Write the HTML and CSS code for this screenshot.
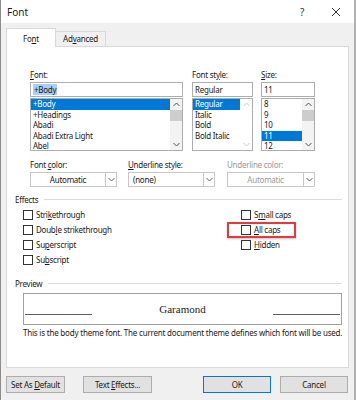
FILE: index.html
```html
<!DOCTYPE html>
<html lang="en">
<head>
    <meta charset="UTF-8">
    <title>Font</title>
    <link rel="stylesheet" href="styles.css">
</head>
<body>
<div class="dialog">
    <!-- title bar -->
    <div class="titlebar">
        <span class="title">Font</span>
        <span class="help">?</span>
        <svg class="close" width="10" height="10" viewBox="0 0 10 10">
            <path d="M1 1 L9 9 M9 1 L1 9" stroke="#333" stroke-width="1" fill="none"/>
        </svg>
    </div>

    <div class="client">
        <div class="tabs">
            <div class="tab active">Fo<u>n</u>t</div>
            <div class="tab">Ad<u>v</u>anced</div>
        </div>

        <div class="panel">
            <!-- font / style / size -->
            <div class="pickers">
                <div class="picker picker-font">
                    <div class="label"><u>F</u>ont:</div>
                    <div class="field"><span class="hilite">+Body</span></div>
                    <div class="listbox">
                        <ul>
                            <li class="selected">+Body</li>
                            <li>+Headings</li>
                            <li>Abadi</li>
                            <li>Abadi Extra Light</li>
                            <li>Abel</li>
                        </ul>
                        <div class="scrollbar">
                            <svg class="arrow" width="7" height="5" viewBox="0 0 7 5"><path d="M0.5 4 L3.5 1 L6.5 4" stroke="#505050" fill="none"/></svg>
                            <div class="thumb"></div>
                            <svg class="arrow down" width="7" height="5" viewBox="0 0 7 5"><path d="M0.5 1 L3.5 4 L6.5 1" stroke="#505050" fill="none"/></svg>
                        </div>
                    </div>
                </div>

                <div class="picker picker-style">
                    <div class="label">Font st<u>y</u>le:</div>
                    <div class="field">Regular</div>
                    <div class="listbox">
                        <ul>
                            <li class="selected">Regular</li>
                            <li>Italic</li>
                            <li>Bold</li>
                            <li>Bold Italic</li>
                        </ul>
                        <div class="scrollbar disabled">
                            <svg class="arrow" width="7" height="5" viewBox="0 0 7 5"><path d="M0.5 4 L3.5 1 L6.5 4" stroke="#c8c8c8" fill="none"/></svg>
                            <svg class="arrow down" width="7" height="5" viewBox="0 0 7 5"><path d="M0.5 1 L3.5 4 L6.5 1" stroke="#c8c8c8" fill="none"/></svg>
                        </div>
                    </div>
                </div>

                <div class="picker picker-size">
                    <div class="label"><u>S</u>ize:</div>
                    <div class="field">11</div>
                    <div class="listbox">
                        <ul>
                            <li>8</li>
                            <li>9</li>
                            <li>10</li>
                            <li class="selected">11</li>
                            <li>12</li>
                        </ul>
                        <div class="scrollbar">
                            <svg class="arrow" width="7" height="5" viewBox="0 0 7 5"><path d="M0.5 4 L3.5 1 L6.5 4" stroke="#505050" fill="none"/></svg>
                            <div class="thumb"></div>
                            <svg class="arrow down" width="7" height="5" viewBox="0 0 7 5"><path d="M0.5 1 L3.5 4 L6.5 1" stroke="#505050" fill="none"/></svg>
                        </div>
                    </div>
                </div>
            </div>

            <!-- colour / underline -->
            <div class="combos">
                <div class="combo-wrap">
                    <div class="label">Font <u>c</u>olor:</div>
                    <div class="combo center">
                        <span class="value">Automatic</span>
                        <span class="drop"><svg width="7" height="5" viewBox="0 0 7 5"><path d="M0.5 1 L3.5 4 L6.5 1" stroke="#606060" fill="none"/></svg></span>
                    </div>
                </div>
                <div class="combo-wrap">
                    <div class="label"><u>U</u>nderline style:</div>
                    <div class="combo">
                        <span class="value">(none)</span>
                        <span class="drop"><svg width="7" height="5" viewBox="0 0 7 5"><path d="M0.5 1 L3.5 4 L6.5 1" stroke="#606060" fill="none"/></svg></span>
                    </div>
                </div>
                <div class="combo-wrap combo-third disabled">
                    <div class="label">Underline color:</div>
                    <div class="combo center">
                        <span class="value">Automatic</span>
                        <span class="drop"><svg width="7" height="5" viewBox="0 0 7 5"><path d="M0.5 1 L3.5 4 L6.5 1" stroke="#606060" fill="none"/></svg></span>
                    </div>
                </div>
            </div>

            <!-- effects -->
            <div class="legend">Effects</div>
            <div class="effects">
                <div class="check"><span class="box"></span>Stri<u>k</u>ethrough</div>
                <div class="check"><span class="box"></span>S<u>m</u>all caps</div>
                <div class="check"><span class="box"></span>Doub<u>l</u>e strikethrough</div>
                <div class="check marked"><span class="box"></span><u>A</u>ll caps<span class="callout"></span></div>
                <div class="check"><span class="box"></span>Su<u>p</u>erscript</div>
                <div class="check"><span class="box"></span><u>H</u>idden</div>
                <div class="check"><span class="box"></span>Su<u>b</u>script</div>
            </div>

            <!-- preview -->
            <div class="legend legend-preview">Preview</div>
            <div class="preview">
                <span class="rule"></span>
                <span class="sample">Garamond</span>
                <span class="rule"></span>
            </div>
            <div class="note">This is the body theme font. The current document theme defines which font will be used.</div>
        </div>

        <div class="buttons">
            <button class="btn btn-default">Set As <u>D</u>efault</button>
            <button class="btn btn-effects">Text <u>E</u>ffects...</button>
            <span class="spacer"></span>
            <button class="btn btn-ok">OK</button>
            <button class="btn btn-cancel">Cancel</button>
        </div>
    </div>
</div>
</body>
</html>
```

FILE: styles.css
```css
* {
    box-sizing: border-box;
}
body {
    margin: 0;
    font-family: "Noto Sans", sans-serif;
    font-size: 8px;
    letter-spacing: -0.25px;
    color: #1a1a1a;
    background: #fff;
}
u {
    text-decoration-thickness: 1px;
    text-underline-offset: 1px;
}
.dialog {
    width: 356px;
    height: 400px;
    border-left: 1px solid #8c8c8c;
    border-right: 2px solid #b0b0b0;
    display: flex;
    flex-direction: column;
}

/* title bar */
.titlebar {
    height: 23px;
    background: #fff;
    display: flex;
    align-items: center;
    padding-left: 6px;
}
.title {
    font-size: 10px;
    letter-spacing: 0;
    flex: 1;
}
.help {
    font-size: 10px;
    color: #333;
    margin-right: 27px;
}
.close {
    margin-right: 13px;
}

.client {
    flex: 1;
    background: #f0f0f0;
    padding: 5px 5px 0 5px;
}

/* tabs */
.tabs {
    display: flex;
    align-items: flex-end;
    height: 18px;
}
.tab {
    width: 50px;
    height: 15px;
    border: 1px solid #d9d9d9;
    border-bottom: none;
    text-align: center;
    line-height: 14px;
    background: #f0f0f0;
}
.tab.active {
    height: 19px;
    margin-bottom: -1px;
    background: #fff;
    line-height: 19px;
    position: relative;
    z-index: 1;
}
.tab + .tab {
    border-left: none;
}

.panel {
    height: 322px;
    width: 343px;
    background: #fff;
    border: 1px solid #d9d9d9;
    padding: 23px 6px 0 8px;
}

.label {
    height: 10px;
    line-height: 10px;
    margin-bottom: 2px;
}

/* pickers */
.pickers {
    display: flex;
    margin-left: 15px;
}
.picker-font { width: 153px; margin-right: 9px; }
.picker-style { width: 61px; margin-right: 8px; }
.picker-size { width: 54px; }

.field {
    height: 15px;
    border: 1px solid #adadad;
    line-height: 13px;
    padding-left: 2px;
    margin-bottom: 1px;
}
.hilite {
    background: #a9d0f2;
    padding: 0 1px;
}
.listbox {
    height: 53px;
    border: 1px solid #adadad;
    display: flex;
    overflow: hidden;
}
.listbox ul {
    flex: 1;
    list-style: none;
    margin: 0;
    padding: 0;
}
.listbox li {
    height: 10.5px;
    line-height: 10.5px;
    padding-left: 2px;
}
.listbox li.selected {
    background: #0078d7;
    color: #fff;
}
.scrollbar {
    width: 12px;
    background: #f3f3f3;
    display: flex;
    flex-direction: column;
    align-items: center;
    padding: 3px 0;
}
.scrollbar .thumb {
    width: 12px;
    height: 11px;
    margin-top: 3px;
    background: #cdcdcd;
}
.scrollbar .down {
    margin-top: auto;
}
.scrollbar.disabled {
    background: #fff;
}

/* combos */
.combos {
    display: flex;
    margin: 9px 0 0 15px;
}
.combo-wrap {
    width: 87px;
    margin-right: 11px;
}
.combo-third {
    width: 88px;
    margin-left: 1px;
    margin-right: 0;
}
.combo-wrap.disabled {
    color: #9a9a9a;
}
.combo {
    height: 15px;
    border: 1px solid #c8c8c8;
    display: flex;
    align-items: stretch;
}
.combo .value {
    flex: 1;
    line-height: 13px;
    padding-left: 4px;
}
.combo.center .value {
    text-align: center;
    padding-left: 0;
}
.combo .drop {
    width: 11px;
    border-left: 1px solid #c8c8c8;
    display: flex;
    align-items: center;
    justify-content: center;
}

/* group legends */
.legend {
    display: flex;
    align-items: center;
    height: 10px;
    margin-top: 7px;
}
.legend::after {
    content: "";
    flex: 1;
    height: 1px;
    background: #dcdcdc;
    margin-left: 6px;
}
.legend-preview {
    margin-top: 11px;
}

/* effects */
.effects {
    display: grid;
    grid-template-columns: 218px auto;
    grid-auto-rows: 15px;
    margin: 3px 0 0 8px;
}
.check {
    display: flex;
    align-items: center;
    position: relative;
}
.check .box {
    width: 10px;
    height: 10px;
    border: 1px solid #333;
    background: #fff;
    margin-right: 3px;
}
.callout {
    position: absolute;
    left: -14px;
    top: 0;
    width: 69px;
    height: 16px;
    border: 2px solid #e3393f;
    box-shadow: 0 1px 2px rgba(0, 0, 0, 0.25);
}

/* preview */
.preview {
    margin: 5px 0 0 8px;
    height: 32px;
    border: 1px solid #a0a0a0;
    display: flex;
    align-items: center;
    padding: 0 1px;
}
.preview .rule {
    width: 67px;
    height: 1px;
    background: #606060;
    margin-top: 10px;
}
.preview .sample {
    flex: 1;
    text-align: center;
    font-family: "Liberation Serif", serif;
    font-size: 11px;
    letter-spacing: 0;
    color: #222;
}
.note {
    margin: 3px 0 0 8px;
    line-height: 10px;
    letter-spacing: -0.2px;
    white-space: nowrap;
}

/* buttons */
.buttons {
    display: flex;
    margin-top: 8px;
    margin-left: 0;
}
.btn {
    height: 17px;
    font-family: "Noto Sans", sans-serif;
    font-size: 8px;
    letter-spacing: -0.25px;
    color: #1a1a1a;
    background: #e1e1e1;
    border: 1px solid #adadad;
    padding: 0;
}
.btn-default { width: 59px; }
.btn-effects { width: 69px; margin-left: 18px; }
.btn-ok {
    width: 68px;
    border-color: #0078d7;
}
.btn-cancel { width: 68px; margin-left: 9px; margin-right: 1px; }
.spacer {
    flex: 1;
}
```
